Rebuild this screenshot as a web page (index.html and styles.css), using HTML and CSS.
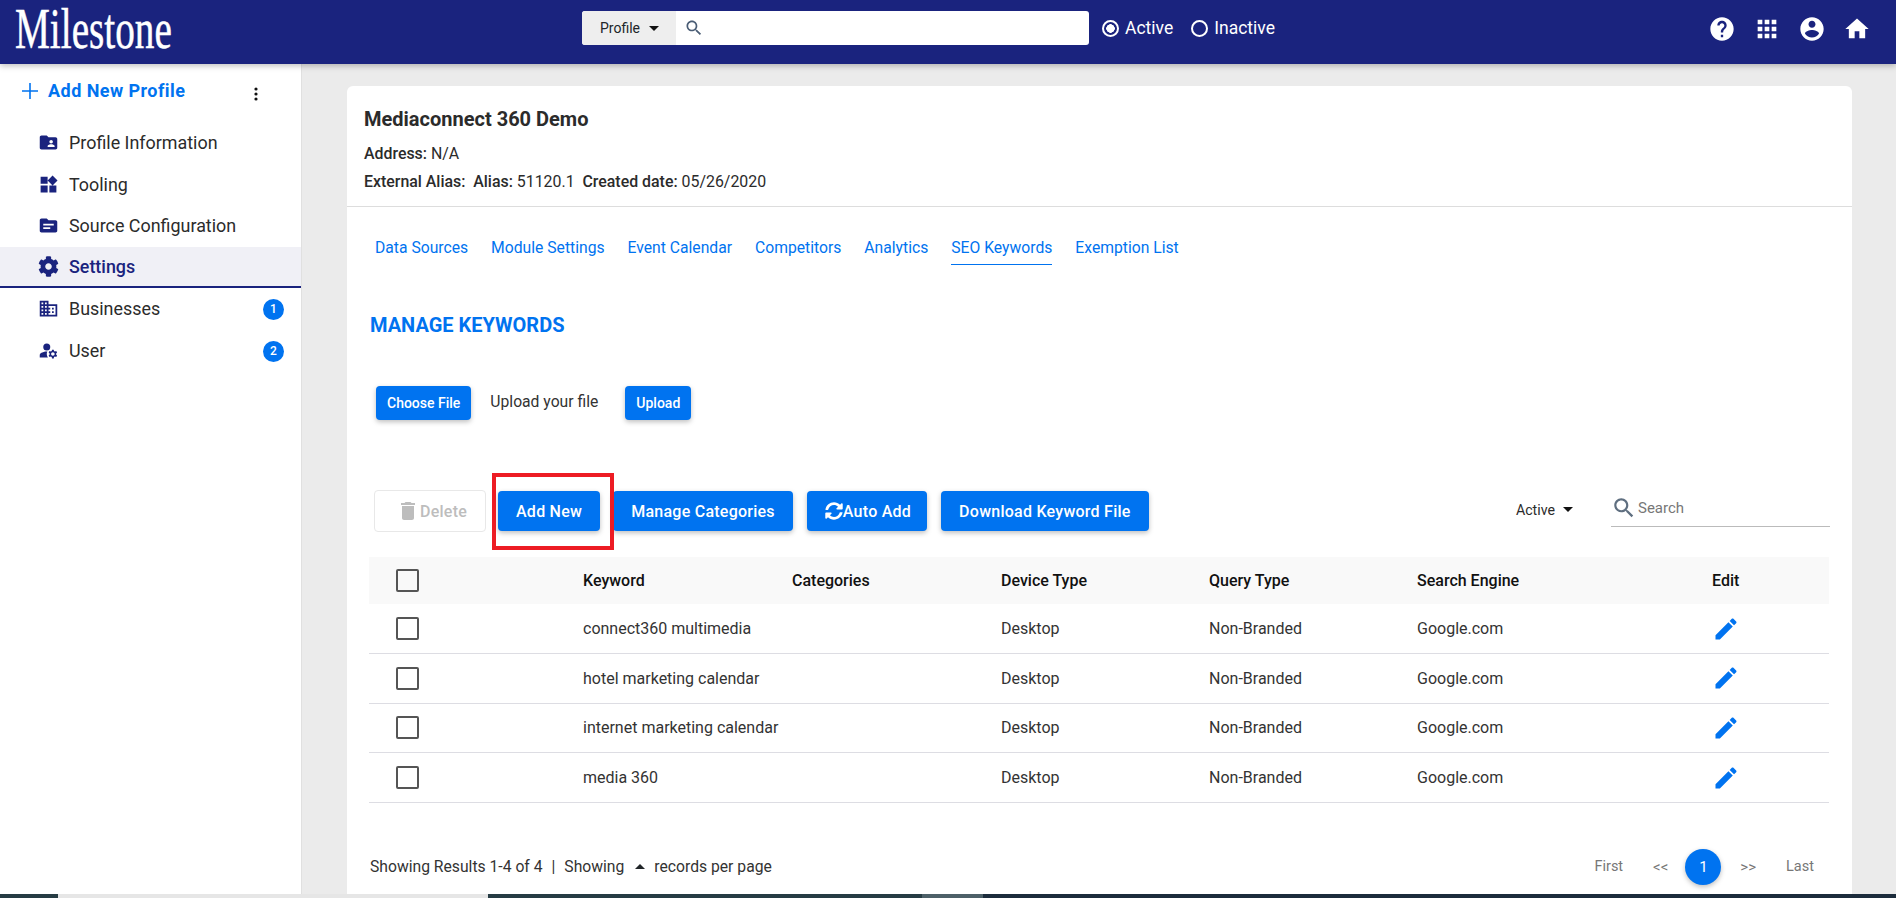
FILE: index.html
```html
<!DOCTYPE html>
<html lang="en">
<head>
  <meta charset="UTF-8" />
  <meta name="viewport" content="width=device-width, initial-scale=1.0"/>
  <title>Manage Keywords</title>
  <link rel="stylesheet" href="styles.css">
</head>
<body>

<svg class="defs" aria-hidden="true">
  <symbol id="edit" viewBox="0 0 24 24"><path d="M3 17.25V21h3.75L17.81 9.94l-3.75-3.75L3 17.25zM20.71 7.04c.39-.39.39-1.02 0-1.41l-2.34-2.34c-.39-.39-1.02-.39-1.41 0l-1.83 1.83 3.75 3.75 1.83-1.83z"/></symbol>
  <symbol id="search" viewBox="0 0 24 24"><path d="M15.5 14h-.79l-.28-.27C15.41 12.59 16 11.11 16 9.5 16 5.91 13.09 3 9.5 3S3 5.91 3 9.5 5.91 16 9.5 16c1.61 0 3.09-.59 4.23-1.57l.27.28v.79l5 4.99L20.49 19l-4.99-5zm-6 0C7.01 14 5 11.99 5 9.5S7.01 5 9.5 5 14 7.01 14 9.5 11.99 14 9.5 14z"/></symbol>
</svg>

<header class="topbar">
  <div class="logo"><span>Milestone</span></div>
  <div class="search-group">
    <div class="search-type">Profile <i class="caret"></i></div>
    <div class="search-field"><svg class="search-icon"><use href="#search"/></svg></div>
  </div>
  <div class="status">
    <span class="radio on"></span><span>Active</span>
    <span class="radio"></span><span>Inactive</span>
  </div>
  <nav class="top-icons">
    <svg viewBox="0 0 24 24"><path d="M12 2C6.48 2 2 6.48 2 12s4.48 10 10 10 10-4.48 10-10S17.52 2 12 2zm1 17h-2v-2h2v2zm2.07-7.75l-.9.92C13.45 12.9 13 13.5 13 15h-2v-.5c0-1.1.45-2.1 1.17-2.83l1.24-1.26c.37-.36.59-.86.59-1.41 0-1.1-.9-2-2-2s-2 .9-2 2H8c0-2.21 1.79-4 4-4s4 1.79 4 4c0 .88-.36 1.68-.93 2.25z"/></svg>
    <svg viewBox="0 0 24 24"><path d="M4 8h4V4H4v4zm6 12h4v-4h-4v4zm-6 0h4v-4H4v4zm0-6h4v-4H4v4zm6 0h4v-4h-4v4zm6-10v4h4V4h-4zm-6 4h4V4h-4v4zm6 6h4v-4h-4v4zm0 6h4v-4h-4v4z"/></svg>
    <svg viewBox="0 0 24 24"><path d="M12 2C6.48 2 2 6.48 2 12s4.48 10 10 10 10-4.48 10-10S17.52 2 12 2zm0 3c1.66 0 3 1.34 3 3s-1.34 3-3 3-3-1.34-3-3 1.34-3 3-3zm0 14.2c-2.5 0-4.71-1.28-6-3.22.03-1.99 4-3.08 6-3.08 1.99 0 5.97 1.09 6 3.08-1.29 1.94-3.5 3.22-6 3.22z"/></svg>
    <svg viewBox="0 0 24 24"><path d="M10 20v-6h4v6h5v-8h3L12 3 2 12h3v8z"/></svg>
  </nav>
</header>

<div class="layout">
  <aside class="sidebar">
    <div class="add-profile">
      <svg viewBox="0 0 16 16"><path d="M7.2 0h1.6v7.2H16v1.6H8.8V16H7.2V8.8H0V7.2h7.2z"/></svg>
      <span>Add New Profile</span>
      <svg class="dots" viewBox="0 0 4 16"><circle cx="2" cy="3" r="1.6"/><circle cx="2" cy="8" r="1.6"/><circle cx="2" cy="13" r="1.6"/></svg>
    </div>
    <ul class="menu">
      <li><svg viewBox="0 0 24 24"><path d="M20 6h-8l-2-2H4c-1.1 0-1.99.9-1.99 2L2 18c0 1.1.9 2 2 2h16c1.1 0 2-.9 2-2V8c0-1.1-.9-2-2-2zm-5 3c1.1 0 2 .9 2 2s-.9 2-2 2-2-.9-2-2 .9-2 2-2zm4 8h-8v-1c0-1.33 2.67-2 4-2s4 .67 4 2v1z"/></svg>Profile Information</li>
      <li><svg viewBox="0 0 24 24"><path d="M13 13v8h8v-8h-8zM3 21h8v-8H3v8zM3 3v8h8V3H3zm13.66-1.31L11 7.34 16.66 13l5.66-5.66-5.66-5.65z"/></svg>Tooling</li>
      <li><svg viewBox="0 0 24 24"><path d="M20 6h-8l-2-2H4c-1.1 0-1.99.9-1.99 2L2 18c0 1.1.9 2 2 2h16c1.1 0 2-.9 2-2V8c0-1.1-.9-2-2-2zm-6 10H6v-2h8v2zm4-4H6v-2h12v2z"/></svg>Source Configuration</li>
      <li class="active"><svg viewBox="0 0 512 512"><path d="M487.4 315.7l-42.6-24.6c4.3-23.2 4.3-47 0-70.2l42.6-24.6c4.9-2.8 7.1-8.6 5.5-14-11.1-35.6-30-67.8-54.7-94.6-3.8-4.1-10-5.1-14.8-2.3L380.8 110c-17.9-15.4-38.5-27.3-60.8-35.1V25.8c0-5.6-3.9-10.5-9.4-11.7-36.7-8.2-74.3-7.8-109.2 0-5.5 1.2-9.4 6.1-9.4 11.7V75c-22.2 7.9-42.8 19.8-60.8 35.1L88.7 85.5c-4.9-2.8-11-1.9-14.8 2.3-24.7 26.7-43.6 58.9-54.7 94.6-1.7 5.4.6 11.2 5.5 14L67.3 221c-4.3 23.2-4.3 47 0 70.2l-42.6 24.6c-4.9 2.8-7.1 8.6-5.5 14 11.1 35.6 30 67.8 54.7 94.6 3.8 4.1 10 5.1 14.8 2.3l42.6-24.6c17.9 15.4 38.5 27.3 60.8 35.1v49.2c0 5.6 3.9 10.5 9.4 11.7 36.7 8.2 74.3 7.8 109.2 0 5.5-1.2 9.4-6.1 9.4-11.7v-49.2c22.2-7.9 42.8-19.8 60.8-35.1l42.6 24.6c4.9 2.8 11 1.9 14.8-2.3 24.7-26.7 43.6-58.9 54.7-94.6 1.5-5.5-.7-11.3-5.6-14.1zM256 336c-44.1 0-80-35.9-80-80s35.9-80 80-80 80 35.9 80 80-35.9 80-80 80z"/></svg>Settings</li>
      <li><svg viewBox="0 0 24 24"><path d="M12 7V3H2v18h20V7H12zM6 19H4v-2h2v2zm0-4H4v-2h2v2zm0-4H4V9h2v2zm0-4H4V5h2v2zm4 12H8v-2h2v2zm0-4H8v-2h2v2zm0-4H8V9h2v2zm0-4H8V5h2v2zm10 12h-8v-2h2v-2h-2v-2h2v-2h-2V9h8v10zm-2-8h-2v2h2v-2zm0 4h-2v2h2v-2z"/></svg>Businesses<b class="badge">1</b></li>
      <li><svg viewBox="0 0 24 24"><circle cx="10" cy="8" r="4"/><path d="M10.67 13.02c-.22-.01-.44-.02-.67-.02-2.42 0-4.68.67-6.61 1.82-.88.52-1.39 1.5-1.39 2.53V20h9.26c-.79-1.13-1.26-2.51-1.26-4 0-1.07.25-2.07.67-2.98zM20.75 16c0-.22-.03-.42-.06-.63l1.14-1.01-1-1.73-1.45.49c-.32-.27-.68-.48-1.08-.63L18 11h-2l-.3 1.49c-.4.15-.76.36-1.08.63l-1.45-.49-1 1.73 1.14 1.01c-.03.21-.06.41-.06.63s.03.42.06.63l-1.14 1.01 1 1.73 1.45-.49c.32.27.68.48 1.08.63L16 21h2l.3-1.49c.4-.15.76-.36 1.08-.63l1.45.49 1-1.73-1.14-1.01c.03-.21.06-.41.06-.63zM17 18c-1.1 0-2-.9-2-2s.9-2 2-2 2 .9 2 2-.9 2-2 2z"/></svg>User<b class="badge">2</b></li>
    </ul>
  </aside>

  <main class="content">
    <section class="card">
      <div class="profile-head">
        <h1>Mediaconnect 360 Demo</h1>
        <p><b>Address:</b> N/A</p>
        <p><b>External Alias:</b> &nbsp;<b>Alias:</b> 51120.1 &nbsp;<b>Created date:</b> 05/26/2020</p>
      </div>

      <div class="tabs">
        <a>Data Sources</a>
        <a>Module Settings</a>
        <a>Event Calendar</a>
        <a>Competitors</a>
        <a>Analytics</a>
        <a class="current">SEO Keywords</a>
        <a>Exemption List</a>
      </div>

      <h2>MANAGE KEYWORDS</h2>

      <div class="upload-row">
        <button class="btn small">Choose File</button>
        <span>Upload your file</span>
        <button class="btn small">Upload</button>
      </div>

      <div class="toolbar">
        <button class="btn disabled">
          <svg viewBox="0 0 24 24"><path d="M6 19c0 1.1.9 2 2 2h8c1.1 0 2-.9 2-2V7H6v12zM19 4h-3.5l-1-1h-5l-1 1H5v2h14V4z"/></svg>Delete
        </button>
        <button class="btn add-new">Add New</button>
        <button class="btn">Manage Categories</button>
        <button class="btn auto-add">
          <svg class="sync" viewBox="0 0 512 512"><path d="M370.72 133.28C339.458 104.008 298.888 87.962 255.848 88c-77.458.068-144.328 53.178-162.791 126.85-1.344 5.363-6.122 9.15-11.651 9.15H24.103c-7.498 0-13.194-6.807-11.807-14.176C33.933 94.924 134.813 8 256 8c66.448 0 126.791 26.136 171.315 68.685L463.03 40.97C478.149 25.851 504 36.559 504 57.941V192c0 13.255-10.745 24-24 24H345.941c-21.382 0-32.09-25.851-16.971-40.971l41.75-41.749zM32 296h134.059c21.382 0 32.09 25.851 16.971 40.971l-41.75 41.75c31.262 29.273 71.835 45.319 114.876 45.28 77.418-.07 144.315-53.144 162.787-126.849 1.344-5.363 6.122-9.15 11.651-9.15h57.304c7.498 0 13.194 6.807 11.807 14.176C478.067 417.076 377.187 504 256 504c-66.448 0-126.791-26.136-171.315-68.685L48.97 471.03C33.851 486.149 8 475.441 8 454.059V320c0-13.255 10.745-24 24-24z"/></svg>Auto Add
        </button>
        <button class="btn">Download Keyword File</button>
        <div class="filter">Active <i class="caret"></i></div>
        <div class="table-search"><svg><use href="#search"/></svg><span>Search</span></div>
      </div>

      <table class="keywords">
        <thead>
          <tr><th><span class="check"></span></th><th>Keyword</th><th>Categories</th><th>Device Type</th><th>Query Type</th><th>Search Engine</th><th>Edit</th></tr>
        </thead>
        <tbody>
          <tr><td><span class="check"></span></td><td>connect360 multimedia</td><td></td><td>Desktop</td><td>Non-Branded</td><td>Google.com</td><td><svg class="pencil"><use href="#edit"/></svg></td></tr>
          <tr><td><span class="check"></span></td><td>hotel marketing calendar</td><td></td><td>Desktop</td><td>Non-Branded</td><td>Google.com</td><td><svg class="pencil"><use href="#edit"/></svg></td></tr>
          <tr><td><span class="check"></span></td><td>internet marketing calendar</td><td></td><td>Desktop</td><td>Non-Branded</td><td>Google.com</td><td><svg class="pencil"><use href="#edit"/></svg></td></tr>
          <tr><td><span class="check"></span></td><td>media 360</td><td></td><td>Desktop</td><td>Non-Branded</td><td>Google.com</td><td><svg class="pencil"><use href="#edit"/></svg></td></tr>
        </tbody>
      </table>

      <div class="table-foot">
        <div class="results">
          <span>Showing Results 1-4 of 4</span>
          <span class="sep">|</span>
          <span>Showing</span>
          <i class="caret up"></i>
          <span>records per page</span>
        </div>
        <div class="pager">
          <a>First</a>
          <a class="arrows">&lt;&lt;</a>
          <a class="page">1</a>
          <a class="arrows">&gt;&gt;</a>
          <a>Last</a>
        </div>
      </div>
    </section>
  </main>
</div>

<div class="strip">
  <span class="s1"></span><span class="s2"></span><span class="s3"></span><span class="s4"></span><span class="s5"></span>
</div>

</body>
</html>
```

FILE: styles.css
```css
* {
  box-sizing: border-box;
}
html, body {
  height: 100%;
}
body {
  margin: 0;
  display: flex;
  flex-direction: column;
  overflow: hidden;
  font-family: Roboto, sans-serif;
  font-size: 16px;
  color: #2b2b2b;
  background: #ebebeb;
}
.defs {
  display: none;
}

/* top bar */
.topbar {
  position: relative;
  z-index: 2;
  flex: 0 0 64px;
  display: flex;
  background: #1a237e;
  box-shadow: 0 2px 6px rgba(0, 0, 0, 0.25);
  color: #fff;
}
.logo {
  width: 582px;
  padding-left: 15px;
}
.logo span {
  display: block;
  width: 240px;
  font-family: "Liberation Serif", serif;
  font-size: 56px;
  line-height: 58px;
  -webkit-text-stroke: 0.5px #fff;
  transform: scaleX(0.7);
  transform-origin: left;
}
.search-group {
  display: flex;
  width: 507px;
  height: 34px;
  margin-top: 11px;
  border-radius: 3px;
  overflow: hidden;
  background: #fff;
}
.search-type {
  width: 94px;
  padding-left: 18px;
  display: flex;
  align-items: center;
  gap: 9px;
  font-size: 14px;
  color: #212529;
  background: #eee;
}
.search-field {
  flex: 1;
  display: flex;
  align-items: center;
  padding-left: 8px;
}
.search-icon {
  width: 20px;
  height: 20px;
  fill: #4a5d75;
}
.caret {
  display: inline-block;
  width: 0;
  height: 0;
  border-left: 5px solid transparent;
  border-right: 5px solid transparent;
  border-top: 5px solid #111;
}
.caret.up {
  border-top: 0;
  border-bottom: 5px solid #212529;
}
.status {
  display: flex;
  align-items: center;
  height: 34px;
  margin-top: 11px;
  margin-left: 13px;
  font-size: 17.5px;
}
.radio {
  width: 17px;
  height: 17px;
  margin-right: 6px;
  border: 2px solid #fff;
  border-radius: 50%;
}
.radio.on {
  background: radial-gradient(circle, #fff 0 4px, transparent 4.5px);
}
.status span:nth-child(2) {
  margin-right: 18px;
}
.top-icons {
  margin-left: auto;
  display: flex;
  gap: 17px;
  padding: 15px 25px 0 0;
}
.top-icons svg {
  width: 28px;
  height: 28px;
  fill: #fff;
}

/* layout */
.layout {
  flex: 1;
  display: flex;
  min-height: 0;
}
.sidebar {
  flex: 0 0 302px;
  background: #fff;
  border-right: 1px solid #e0e0e0;
}
.add-profile {
  display: flex;
  align-items: center;
  height: 53px;
  padding: 0 0 0 22px;
  font-size: 18px;
  font-weight: 700;
  letter-spacing: 0.45px;
  color: #0073f0;
}
.add-profile svg {
  width: 16px;
  height: 16px;
  margin-right: 10px;
  fill: #0073f0;
}
.add-profile .dots {
  width: 4px;
  margin: 6px 0 0 69px;
  fill: #111;
}
.menu {
  list-style: none;
  margin: 5px 0 0;
  padding: 0;
}
.menu li {
  display: flex;
  align-items: center;
  height: 41.5px;
  padding-left: 38px;
  font-size: 17.9px;
}
.menu li svg {
  width: 21px;
  height: 21px;
  margin-right: 10px;
  fill: #1a237e;
}
.menu li.active {
  padding-top: 1px;
  background: #f0f0f6;
  border-bottom: 2px solid #1a237e;
  color: #1a237e;
  font-weight: 500;
}
.badge {
  margin: 2px 17px 0 auto;
  width: 21px;
  height: 21px;
  border-radius: 50%;
  background: #0073f0;
  color: #fff;
  font-size: 12px;
  font-weight: 500;
  line-height: 21px;
  text-align: center;
}

/* card */
.content {
  flex: 1;
  padding: 22px 44px 0 45px;
  min-width: 0;
}
.card {
  height: 100%;
  background: #fff;
  border-radius: 6px 6px 0 0;
  overflow: hidden;
}
.profile-head {
  padding: 22px 17px 10px;
  border-bottom: 1px solid #ddd;
}
.profile-head h1 {
  margin: 0 0 10px;
  font-size: 20px;
  line-height: 22px;
  font-weight: 700;
}
.profile-head p {
  margin: 0;
  font-size: 15.9px;
  line-height: 28px;
}
.profile-head b {
  font-weight: 500;
}
.tabs {
  display: flex;
  gap: 23px;
  padding: 32px 0 0 28px;
}
.tabs a {
  padding-bottom: 7px;
  font-size: 15.7px;
  line-height: 18px;
  color: #0073f0;
}
.tabs a.current {
  border-bottom: 1px solid #0073f0;
}
h2 {
  margin: 48px 0 0 23px;
  font-size: 20px;
  line-height: 24px;
  font-weight: 700;
  color: #0073f0;
}
.upload-row {
  display: flex;
  align-items: center;
  gap: 19px;
  margin: 49px 0 0 29px;
  font-size: 15.7px;
  color: #333;
}
.upload-row span {
  margin: -3px 8px 0 0;
}
.btn {
  display: inline-flex;
  align-items: center;
  height: 40px;
  padding: 0 18px;
  border: 0;
  border-radius: 4px;
  background: #0073f0;
  box-shadow: 0 2px 5px rgba(0, 0, 0, 0.25);
  font-family: inherit;
  font-size: 16px;
  font-weight: 500;
  letter-spacing: 0.25px;
  color: #fff;
}
.btn.small {
  height: 34px;
  padding: 0 11px;
  font-size: 14px;
  letter-spacing: 0;
}
.btn.disabled {
  width: 112px;
  height: 42px;
  margin-right: -2px;
  padding: 0 0 0 21px;
  background: #fff;
  border: 1px solid #e8e8e8;
  box-shadow: none;
  color: #bdbdbd;
}
.btn.disabled svg {
  width: 24px;
  height: 26px;
  fill: #bdbdbd;
}
.btn .sync {
  width: 18px;
  height: 18px;
  fill: #fff;
}
.auto-add {
  padding-right: 16px;
}
/* red marker drawn over the screenshot */
.add-new {
  position: relative;
  margin-right: -1px;
}
.add-new::after {
  content: "";
  position: absolute;
  top: -18px;
  right: -14px;
  bottom: -19px;
  left: -6px;
  border: 4px solid #ed1c24;
}
.toolbar {
  display: flex;
  align-items: center;
  gap: 14px;
  margin: 70px 0 0 27px;
  height: 42px;
}
.filter {
  margin: -3px 0 0 auto;
  display: flex;
  align-items: center;
  gap: 8px;
  font-size: 14.2px;
}
.table-search {
  align-self: flex-start;
  display: flex;
  align-items: center;
  gap: 1px;
  width: 219px;
  height: 37px;
  margin: 0 22px 0 24px;
  padding-bottom: 1px;
  border-bottom: 1px solid #bbb;
  font-size: 15px;
  color: #777;
}
.table-search svg {
  width: 26px;
  height: 26px;
  fill: #5f6f80;
}

/* table */
.keywords {
  width: 1460px;
  margin: 25px 0 0 22px;
  border-collapse: collapse;
  table-layout: fixed;
  font-size: 16px;
}
.keywords th {
  height: 47px;
  background: #f9f9f9;
  font-weight: 500;
  color: #111;
  text-align: left;
  padding: 0;
}
.keywords td {
  height: 49.6px;
  padding: 0;
  border-bottom: 1px solid #dddde3;
  color: #333;
}
.keywords th:first-child, .keywords td:first-child {
  width: 214px;
  padding-left: 27px;
}
.keywords th:nth-child(2) {
  width: 209px;
}
.keywords th:nth-child(3) {
  width: 209px;
}
.keywords th:nth-child(4) {
  width: 208px;
}
.keywords th:nth-child(5) {
  width: 208px;
}
.keywords th:nth-child(6) {
  width: 295px;
}
.check {
  display: block;
  width: 23px;
  height: 23px;
  border: 2px solid #555;
  border-radius: 2px;
}
.pencil {
  display: block;
  width: 28px;
  height: 28px;
  fill: #0073f0;
}

.table-foot {
  display: flex;
  justify-content: space-between;
  align-items: center;
  margin: 46px 38px 0 23px;
  font-size: 15.7px;
  color: #333;
}
.results {
  display: flex;
  align-items: center;
  gap: 9px;
}
.results .caret {
  margin: 0 0 0 2px;
}
.pager {
  display: flex;
  align-items: center;
  color: #777;
  font-size: 14.5px;
}
.pager a {
  margin-left: 30px;
}
.pager .arrows {
  font-size: 15px;
}
.pager .page {
  width: 36px;
  height: 36px;
  margin-left: 17px;
  border-radius: 50%;
  background: #0073f0;
  box-shadow: 0 2px 5px rgba(0, 0, 0, 0.25);
  color: #fff;
  font-size: 15px;
  line-height: 36px;
  text-align: center;
}
.pager .page + .arrows {
  margin-left: 19px;
}

/* strip along the bottom edge */
.strip {
  flex: 0 0 4px;
  display: flex;
  position: relative;
  z-index: 3;
  background: #263c44;
}
.s1 { width: 58px; }
.s2 { width: 430px; background: #e6e6e6; }
.s3 { width: 434px; }
.s4 { width: 61px; background: #4d6068; }
.s5 { flex: 1; background: #1c2c3c; }
```
